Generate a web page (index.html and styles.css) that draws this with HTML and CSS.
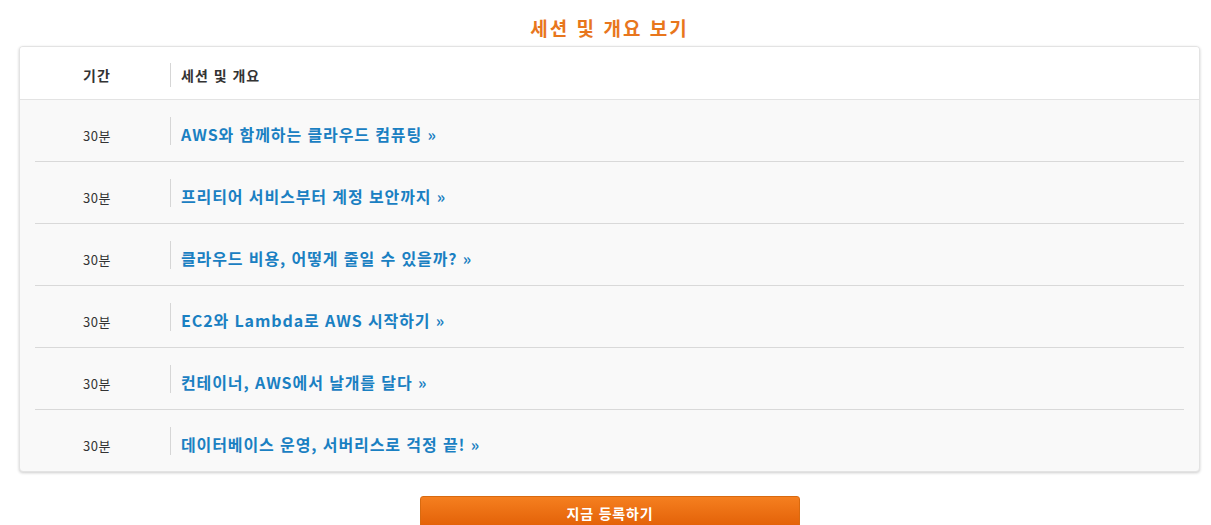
FILE: index.html
```html
<!DOCTYPE html>
<html lang="ko">
<head>
<meta charset="utf-8">
<link rel="stylesheet" href="styles.css">
</head>
<body>
<div class="wrap">
  <h2 class="title">세션 및 개요 보기</h2>
  <div class="card">
    <div class="head">
      <div class="c1">기간</div>
      <div class="c2"><span class="bar">세션 및 개요</span></div>
    </div>
    <div class="body">
      <div class="row"><div class="c1">30분</div><div class="c2"><a class="bar link">AWS와 함께하는 클라우드 컴퓨팅 »</a></div></div>
      <div class="row"><div class="c1">30분</div><div class="c2"><a class="bar link">프리티어 서비스부터 계정 보안까지 »</a></div></div>
      <div class="row"><div class="c1">30분</div><div class="c2"><a class="bar link">클라우드 비용, 어떻게 줄일 수 있을까? »</a></div></div>
      <div class="row"><div class="c1">30분</div><div class="c2"><a class="bar link">EC2와 Lambda로 AWS 시작하기 »</a></div></div>
      <div class="row"><div class="c1">30분</div><div class="c2"><a class="bar link">컨테이너, AWS에서 날개를 달다 »</a></div></div>
      <div class="row"><div class="c1">30분</div><div class="c2"><a class="bar link">데이터베이스 운영, 서버리스로 걱정 끝! »</a></div></div>
    </div>
  </div>
  <div class="cta"><a class="btn">지금 등록하기</a></div>
</div>
</body>
</html>
```

FILE: styles.css
```css
html, body { margin: 0; padding: 0; background: #fff; }
body { font-family: "Noto Sans CJK KR", "Noto Sans", sans-serif; color: #333; }
.wrap { padding: 0 11px 0 19px; }
.title {
  margin: 0; padding-top: 15px; height: 31px;
  text-align: center; font-size: 19px; line-height: 26px; font-weight: 700;
  letter-spacing: 2px; color: #e8761c;
}
.card {
  border: 1px solid #e3e3e3; border-radius: 4px;
  box-shadow: 0 1px 3px rgba(0,0,0,0.2);
  overflow: hidden; background: #f9f9f9;
}
.head {
  display: flex; height: 52px; background: #fff;
  border-bottom: 1px solid #e3e3e3; align-items: center;
  font-size: 14px; font-weight: 700; color: #333; letter-spacing: 1px;
}
.head .bar { line-height: 24px; }
.c1 { width: 146px; padding-left: 4px; text-align: center; flex: none; }
.c2 { flex: 1; display: flex; }
.bar { border-left: 1px solid #d6d6d6; padding-left: 10px; display: block; }
.head .c1, .head .bar { margin-top: 4px; }
.body { padding: 0 15px; }
.row {
  display: flex; border-bottom: 1px solid #d9d9d9;
  padding-top: 17px; box-sizing: content-box; height: 44px;
}
.row:last-child { border-bottom: none; }
.body .row .c1 {
  width: 124px; padding: 5px 11px 0 0; font-size: 13px; line-height: 28px;
  color: #333; letter-spacing: 0.5px;
}
.link {
  font-size: 16px; font-weight: 700; color: #1a80c2; line-height: 28px;
  height: 28px; padding-top: 3px; box-sizing: border-box; display: flex; align-items: flex-start;
  letter-spacing: 0.9px; text-decoration: none;
}
.cta { text-align: center; padding-top: 24px; }
.btn {
  display: inline-block; width: 378px; height: 34px; margin-left: 1px;
  background: linear-gradient(#f57f1f, #e05c04);
  border: 1px solid #d86a10; border-radius: 3px;
  color: #fff; font-weight: 700; font-size: 14px; line-height: 32px;
  letter-spacing: 0.8px; text-decoration: none;
}
```
